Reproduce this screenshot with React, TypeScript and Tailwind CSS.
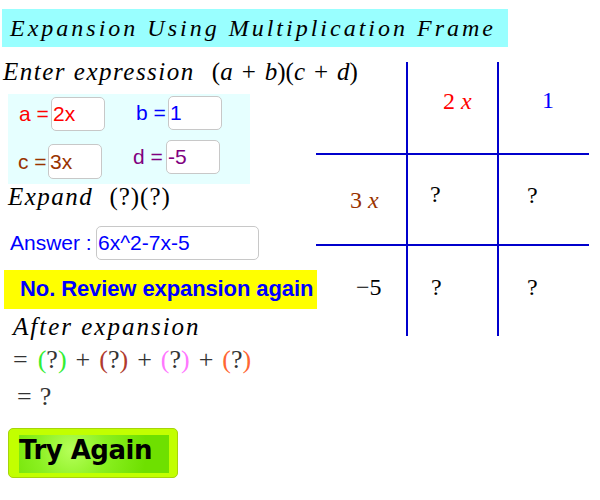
import React from "react";

const serif = "font-['Liberation_Serif','Times_New_Roman',serif]";
const sans = "font-['Liberation_Sans',Arial,sans-serif]";

function Box({ children, w, h, color }: { children: React.ReactNode; w: string; h: string; color: string }) {
  return (
    <div className={`${w} ${h} bg-white border border-[#c8c8c8] rounded-[5px] flex items-center pl-[1px] text-[21px] leading-[24px] ${color}`}>
      {children}
    </div>
  );
}

function Plus() {
  return <span className="mx-[9px]">+</span>;
}

export default function App() {
  return (
    <div className={`w-[600px] h-[500px] bg-white overflow-hidden text-black ${serif}`}>
      {/* title */}
      <div className="mt-[9px] ml-[2px] w-[506px] h-[38px] bg-[#99ffff] flex items-center pl-[8px]">
        <span className="italic text-[24px] leading-[28px] tracking-[3px] whitespace-nowrap">Expansion Using Multiplication Frame</span>
      </div>

      <div className="flex">
        {/* left column */}
        <div className="w-[316px] shrink-0 flex flex-col">
          <div className="mt-[11px] h-[28px] leading-[28px] text-[25px] pl-[3px] whitespace-nowrap">
            <span className="italic tracking-[1.5px]">Enter expression</span>
            <span className="ml-[17px]">(<i>a</i><Plus /><i>b</i>)(<i>c</i><Plus /><i>d</i>)</span>
          </div>

          {/* inputs panel */}
          <div className={`mt-[8px] ml-[8px] w-[242px] h-[90px] bg-[#e6ffff] flex flex-col ${sans}`}>
            <div className="flex items-start">
              <div className="ml-[11px] mt-[3px] flex items-center">
                <span className="w-[32px] text-[21px] leading-[24px] text-[#ff0000] whitespace-nowrap">a =</span>
                <Box w="w-[54px]" h="h-[34px]" color="text-[#ff0000]">2x</Box>
              </div>
              <div className="ml-[31px] mt-[2px] flex items-center">
                <span className="w-[32px] text-[21px] leading-[24px] text-[#0000ff] whitespace-nowrap">b =</span>
                <Box w="w-[54px]" h="h-[34px]" color="text-[#0000ff]">1</Box>
              </div>
            </div>
            <div className="flex items-start">
              <div className="ml-[10px] mt-[13px] flex items-center">
                <span className="w-[30px] text-[21px] leading-[24px] text-[#993300] whitespace-nowrap">c =</span>
                <Box w="w-[54px]" h="h-[35px]" color="text-[#993300]">3x</Box>
              </div>
              <div className="ml-[31px] mt-[9px] flex items-center">
                <span className="w-[33px] text-[21px] leading-[24px] text-[#800080] whitespace-nowrap">d =</span>
                <Box w="w-[54px]" h="h-[34px]" color="text-[#800080]">-5</Box>
              </div>
            </div>
          </div>

          <div className="mt-[-1px] h-[28px] leading-[28px] text-[25px] pl-[8px] whitespace-nowrap">
            <span className="italic tracking-[1.5px]">Expand</span>
            <span className="ml-[16px] tracking-[1px]">(?)(?)</span>
          </div>

          {/* answer */}
          <div className={`mt-[15px] flex items-center ${sans}`}>
            <span className="ml-[10px] w-[86px] text-[21px] leading-[24px] text-[#0000ff] whitespace-nowrap">Answer :</span>
            <Box w="w-[163px]" h="h-[34px]" color="text-[#0000ff]">6x^2-7x-5</Box>
          </div>

          {/* feedback */}
          <div className={`mt-[10px] ml-[4px] w-[313px] h-[39px] bg-[#ffff00] flex items-center pl-[16px] pb-[3px] ${sans}`}>
            <span className="font-bold text-[22px] leading-[25px] text-[#0000ff] whitespace-nowrap tracking-[-0.1px]">No. Review expansion again</span>
          </div>

          <div className="mt-[4px] h-[28px] leading-[28px] text-[25px] pl-[13px] whitespace-nowrap">
            <span className="italic tracking-[2px]">After expansion</span>
          </div>

          <div className="mt-[5px] h-[28px] leading-[28px] text-[26px] pl-[13px] whitespace-nowrap text-[#333333]">
            <span className="mr-[10px]">=</span>
            <span className="text-[#33ee33]">(</span>?<span className="text-[#33ee33]">)</span>
            <Plus />
            <span className="text-[#b03a2e]">(</span>?<span className="text-[#b03a2e]">)</span>
            <Plus />
            <span className="text-[#ff77ff]">(</span>?<span className="text-[#ff77ff]">)</span>
            <Plus />
            <span className="text-[#ff6633]">(</span>?<span className="text-[#ff6633]">)</span>
          </div>

          <div className="mt-[9px] h-[28px] leading-[28px] text-[26px] pl-[17px] whitespace-nowrap text-[#333333]">
            <span className="mr-[8px]">=</span>?
          </div>

          {/* try again button */}
          <div className="mt-[17px] ml-[8px] w-[170px] h-[50px] bg-[#c2ff00] border border-[#a6d40a] rounded-[5px] pl-[10px] pt-[6px] pr-[8px] pb-[4px]">
            <div className="h-full w-full bg-[radial-gradient(circle_at_35%_40%,#b6ff5a_0%,#8af020_35%,#6ee000_75%)] flex items-start">
              <span className="font-['DejaVu_Sans',sans-serif] font-bold text-[26px] leading-[30px] text-black whitespace-nowrap tracking-[-0.5px]">Try Again</span>
            </div>
          </div>
        </div>

        {/* multiplication frame */}
        <div className="mt-[15px] grid grid-cols-[92px_91px_90px] grid-rows-[93px_91px_90px] text-[24px] leading-[28px]">
          <div className="border-r-2 border-b-2 border-[#0000cc]"></div>
          <div className="border-r-2 border-b-2 border-[#0000cc] pl-[35px] pt-[25px] text-[#ff0000] whitespace-nowrap">2 <i>x</i></div>
          <div className="border-b-2 border-[#0000cc] pl-[43px] pt-[24px] text-[#0000ff]">1</div>

          <div className="border-r-2 border-b-2 border-[#0000cc] pl-[34px] pt-[31px] text-[#993300] whitespace-nowrap">3 <i>x</i></div>
          <div className="border-r-2 border-b-2 border-[#0000cc] pl-[22px] pt-[25px]">?</div>
          <div className="border-b-2 border-[#0000cc] pl-[28px] pt-[26px]">?</div>

          <div className="border-r-2 border-[#0000cc] pl-[40px] pt-[27px] whitespace-nowrap">−5</div>
          <div className="border-r-2 border-[#0000cc] pl-[23px] pt-[27px]">?</div>
          <div className="pl-[28px] pt-[27px]">?</div>
        </div>
      </div>
    </div>
  );
}
